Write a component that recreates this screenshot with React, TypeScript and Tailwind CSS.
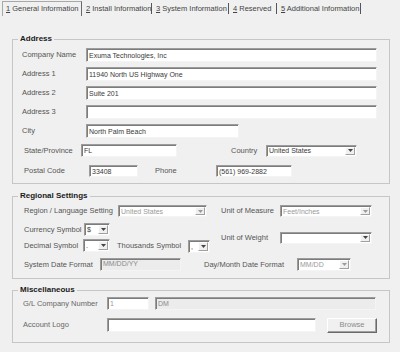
import React from 'react';

const sunken =
  'border border-t-[#9c9c9c] border-l-[#9c9c9c] border-r-[#f4f4f4] border-b-[#f4f4f4] shadow-[inset_1px_1px_0_#7c7c7c]';

function TextBox({
  value = '',
  className = '',
  disabled = false,
}: {
  value?: string;
  className?: string;
  disabled?: boolean;
}) {
  return (
    <div
      className={`${sunken} ${className} shrink-0 flex items-center px-[2px] text-[7px] leading-none whitespace-nowrap overflow-hidden ${
        disabled ? 'bg-[#ececec] text-[#8a8a8a]' : 'bg-white text-[#3a3a3a]'
      }`}
    >
      {value}
    </div>
  );
}

function Combo({
  value = '',
  className = '',
  disabled = false,
}: {
  value?: string;
  className?: string;
  disabled?: boolean;
}) {
  return (
    <div
      className={`${sunken} ${className} shrink-0 flex items-stretch bg-white text-[7px] leading-none`}
    >
      <div
        className={`flex-1 flex items-center px-[2px] whitespace-nowrap overflow-hidden ${
          disabled ? 'text-[#9a9a9a]' : 'text-[#3a3a3a]'
        }`}
      >
        {value}
      </div>
      <div className="w-[10px] my-[1px] mr-[1px] bg-[#f0f0f0] border border-t-white border-l-white border-r-[#a0a0a0] border-b-[#a0a0a0] flex items-center justify-center">
        <svg width="5" height="3" viewBox="0 0 5 3">
          <path d="M0 0h5L2.5 3z" fill={disabled ? '#9a9a9a' : '#444'} />
        </svg>
      </div>
    </div>
  );
}

function Label({ text, className = '' }: { text: string; className?: string }) {
  return (
    <div className={`${className} shrink-0 text-[7.5px] leading-none whitespace-nowrap`}>
      {text}
    </div>
  );
}

function Group({
  title,
  className = '',
  children,
}: {
  title: string;
  className?: string;
  children: React.ReactNode;
}) {
  return (
    <fieldset className={`ml-[12px] w-[378px] border border-[#c6c6c6] ${className}`}>
      <legend className="ml-[5px] px-[2px] text-[8px] leading-[10px] font-bold text-[#1a1a1a]">
        {title}
      </legend>
      {children}
    </fieldset>
  );
}

export default function App() {
  return (
    <div className="w-[400px] h-[352px] overflow-hidden bg-[#f0f0f0] font-['Liberation_Sans',Arial,sans-serif]">
      {/* Tabs */}
      <div className="flex items-end h-[16px] text-[7.5px] leading-none text-[#444]">
        <div className="ml-[2px] w-[80px] h-[15px] border border-b-0 border-[#a8a8a8] border-r-[#6a6a6a] flex items-center pl-[3px] whitespace-nowrap">
          <span className="underline">1</span>&nbsp;General Information
        </div>
        <div className="w-[70px] h-[15px] flex items-center">
          <div className="flex-1 pl-[4px] whitespace-nowrap">
            <span className="underline">2</span> Install Information
          </div>
          <div className="w-px h-[11px] bg-[#555]" />
        </div>
        <div className="w-[77px] h-[15px] flex items-center">
          <div className="flex-1 pl-[4px] whitespace-nowrap">
            <span className="underline">3</span> System Information
          </div>
          <div className="w-px h-[11px] bg-[#555]" />
        </div>
        <div className="w-[48px] h-[15px] flex items-center">
          <div className="flex-1 pl-[4px] whitespace-nowrap">
            <span className="underline">4</span> Reserved
          </div>
          <div className="w-px h-[11px] bg-[#555]" />
        </div>
        <div className="w-[84px] h-[15px] flex items-center">
          <div className="flex-1 pl-[4px] whitespace-nowrap">
            <span className="underline">5</span> Additional Information
          </div>
          <div className="w-px h-[11px] bg-[#555]" />
        </div>
      </div>

      {/* Address */}
      <Group title="Address" className="mt-[18px] pb-[6px] text-[#555]">
        <div className="pl-[9px]">
          <div className="mt-[4px] flex items-center h-[14px]">
            <Label text="Company Name" className="w-[64px]" />
            <TextBox value="Exuma Technologies, Inc" className="w-[291px] h-[14px]" />
          </div>
          <div className="mt-[5px] flex items-center h-[14px]">
            <Label text="Address 1" className="w-[64px]" />
            <TextBox value="11940 North US Highway One" className="w-[291px] h-[14px]" />
          </div>
          <div className="mt-[5px] flex items-center h-[14px]">
            <Label text="Address 2" className="w-[64px]" />
            <TextBox value="Suite 201" className="w-[291px] h-[14px]" />
          </div>
          <div className="mt-[5px] flex items-center h-[14px]">
            <Label text="Address 3" className="w-[64px]" />
            <TextBox className="w-[291px] h-[14px]" />
          </div>
          <div className="mt-[5px] flex items-center h-[14px]">
            <Label text="City" className="w-[64px]" />
            <TextBox value="North Palm Beach" className="w-[153px] h-[14px]" />
          </div>
          <div className="mt-[6px] flex items-center h-[13px]">
            <Label text="State/Province" className="ml-[2px] w-[57px]" />
            <TextBox value="FL" className="w-[96px] h-[13px]" />
            <Label text="Country" className="ml-[54px] w-[35px]" />
            <Combo value="United States" className="w-[91px] h-[12px]" />
          </div>
          <div className="mt-[8px] flex items-center h-[12px]">
            <Label text="Postal Code" className="ml-[2px] w-[65px]" />
            <TextBox value="33408" className="w-[49px] h-[12px]" />
            <Label text="Phone" className="ml-[17px] w-[61px]" />
            <TextBox value="(561) 969-2882" className="w-[76px] h-[12px]" />
          </div>
        </div>
      </Group>

      {/* Regional Settings */}
      <Group title="Regional Settings" className="mt-[7px] pb-[7px] text-[#555]">
        <div className="pl-[11px]">
          <div className="mt-[4px] flex items-center h-[12px]">
            <Label text="Region / Language Setting" className="w-[94px]" />
            <Combo value="United States" disabled className="w-[89px] h-[12px]" />
            <Label text="Unit of Measure" className="ml-[14px] w-[59px]" />
            <Combo value="Feet/Inches" disabled className="w-[92px] h-[12px]" />
          </div>
          <div className="mt-[6px] flex items-center">
            <div className="w-[186px] shrink-0">
              <div className="flex items-center h-[13px]">
                <Label text="Currency Symbol" className="w-[60px]" />
                <Combo value="$" className="w-[26px] h-[13px]" />
              </div>
              <div className="mt-[3px] flex items-center h-[13px]">
                <Label text="Decimal Symbol" className="w-[59px]" />
                <Combo value="." className="w-[27px] h-[13px]" />
                <Label text="Thousands Symbol" className="ml-[7px] w-[71px]" />
                <Combo value="," className="w-[22px] h-[13px] mt-[1px]" />
              </div>
            </div>
            <Label text="Unit of Weight" className="ml-[11px] w-[59px]" />
            <Combo className="w-[92px] h-[12px]" />
          </div>
          <div className="mt-[6px] flex items-center h-[13px]">
            <Label text="System Date Format" className="w-[76px]" />
            <TextBox value="MM/DD/YY" disabled className="w-[81px] h-[13px] items-start pt-[1px]" />
            <Label text="Day/Month Date Format" className="ml-[23px] w-[93px]" />
            <Combo value="MM/DD" disabled className="w-[54px] h-[13px]" />
          </div>
        </div>
      </Group>

      {/* Miscellaneous */}
      <Group title="Miscellaneous" className="mt-[6px] pb-[10px] text-[#666]">
        <div className="pl-[10px]">
          <div className="mt-[2px] flex items-center h-[13px]">
            <Label text="G/L Company Number" className="w-[84px]" />
            <TextBox value="1" className="w-[42px] h-[13px] text-[#999]" />
            <TextBox value="DM" disabled className="ml-[6px] w-[221px] h-[13px]" />
          </div>
          <div className="mt-[8px] flex items-center h-[14px]">
            <Label text="Account Logo" className="w-[84px]" />
            <TextBox className="w-[209px] h-[14px]" />
            <div className="ml-[11px] w-[50px] h-[15px] shrink-0 bg-[#f0f0f0] border border-t-white border-l-white border-r-[#6a6a6a] border-b-[#6a6a6a] shadow-[inset_-1px_-1px_0_#a0a0a0] flex items-center justify-center text-[7.5px] leading-none text-[#8a8a8a]">
              Browse
            </div>
          </div>
        </div>
      </Group>
    </div>
  );
}
